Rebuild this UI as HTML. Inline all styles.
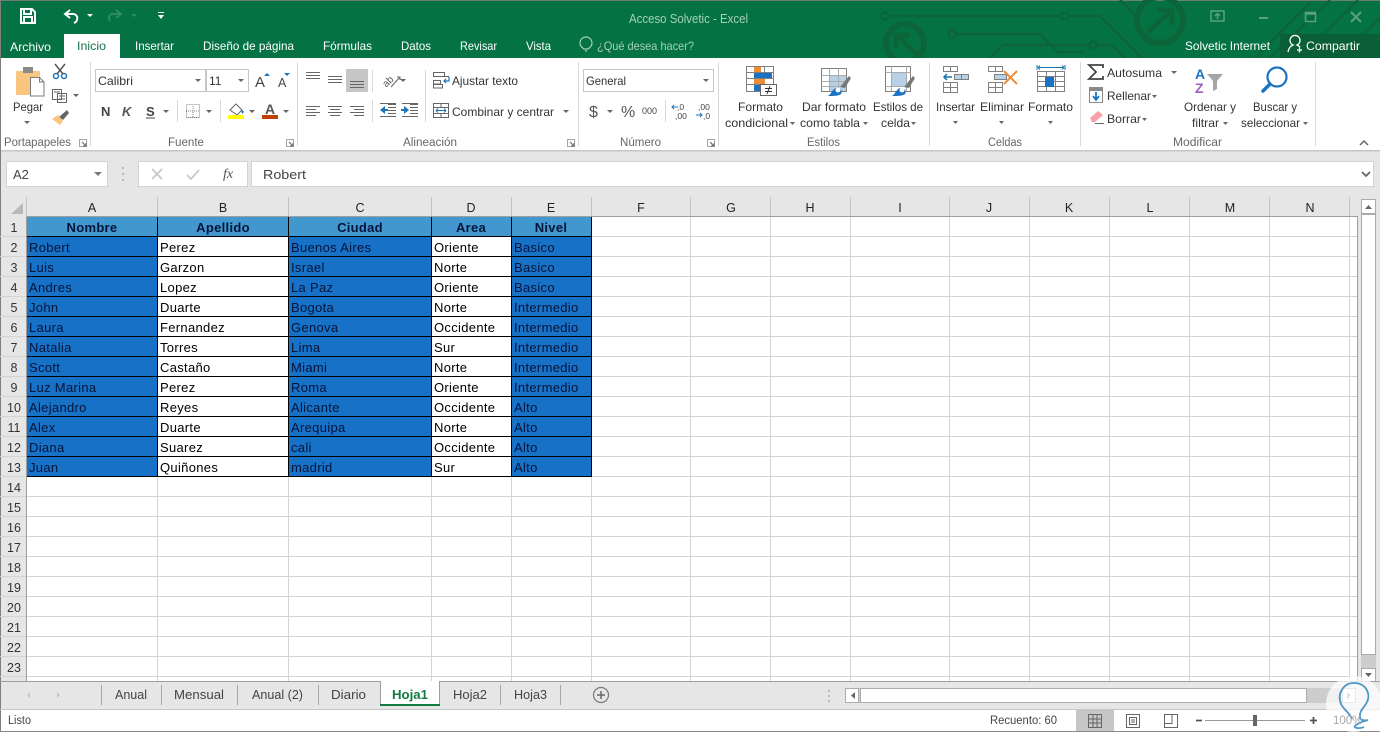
<!DOCTYPE html>
<html><head><meta charset="utf-8"><title>Acceso Solvetic - Excel</title>
<style>
html,body{margin:0;padding:0;width:1380px;height:732px;overflow:hidden;background:#fff}
svg{display:block;position:absolute;left:0;top:0}
text{font-family:"Liberation Sans",sans-serif;font-size:12px;fill:#444}
.t{fill:#fff}
.g{fill:#666;font-size:11.5px}
.r{fill:#333}
.c{font-size:13px;letter-spacing:.31px;fill:#000}
.b{font-size:13px;letter-spacing:.31px;fill:#03143a}
.h{font-size:13px;letter-spacing:.3px;font-weight:bold;fill:#03143a;text-anchor:middle}
.cl{font-size:12.5px;fill:#222;text-anchor:middle}
.rn{font-size:12.5px;fill:#333;text-anchor:middle}
.s{font-size:12.5px;fill:#444}
</style></head><body>
<svg width="1380" height="732" viewBox="0 0 1380 732" xmlns="http://www.w3.org/2000/svg">
<rect width="1380" height="732" fill="#e6e6e6"/>
<!-- title bar -->
<rect width="1380" height="58" fill="#047242"/>
<rect width="1380" height="1" fill="#6f7f76"/>
<g fill="none" stroke="#0c6539" stroke-width="2.5">
<circle cx="1160" cy="20" r="23" stroke-width="6"/>
<path d="M1148 32L1172 10M1157 10H1172V25" stroke-width="5"/>
<circle cx="905" cy="43" r="19" stroke-width="6"/>
<path d="M916 54L897 35M896 48V35H909" stroke-width="5"/>
<circle cx="885" cy="16" r="3.500"/><circle cx="1065" cy="16" r="3.500"/><circle cx="952" cy="34" r="3.500"/><circle cx="1093" cy="45" r="3.500"/>
<path d="M889 16H1061M1069 16H1100L1142 58M956 34H1040L1058 52H1085M1097 45H1112L1125 58M990 58L1003 45H1089M1120 0L1136 16M1255 58L1310 3M1270 58L1330 0M1340 58L1380 18M1300 58L1358 0"/>
</g>
<rect x="1280" y="34" width="100" height="24" fill="#0a5f37"/>
<rect x="64" y="34" width="56" height="25" fill="#fff"/>
<!-- QAT -->
<path d="M21 9h11l3 3v11H21zM24 9v5h7V9M24 23v-6h8v6" fill="none" stroke="#fff" stroke-width="2"/>
<path d="M70 10l-5 4 5 4M65 14h8c5 0 6 7 1 9" fill="none" stroke="#fff" stroke-width="2"/>
<path d="M116 10l5 4-5 4M121 14h-8c-4 0-5 4-3 7" fill="none" stroke="#2f8c60" stroke-width="2"/>
<path d="M87 14h6l-3 3z" fill="#fff"/><path d="M131 14h6l-3 3z" fill="#2f8c60"/>
<path d="M158 12h6v1h-6zM158 15h6l-3 4z" fill="#fff"/>
<text x="629" y="23" style="fill:#a5d1ba;font-size:12.5px" textLength="119" lengthAdjust="spacingAndGlyphs">Acceso Solvetic - Excel</text>
<g fill="none" stroke="#5aa27f" stroke-width="1.500">
<path d="M1211 11h13v10h-13zM1217.500 19v-5M1215 16l2.500-2.500 2.500 2.500"/>
<path d="M1259 18h9" stroke-width="2"/>
<path d="M1305.500 12.500h10v9h-10zM1305 14h11" />
<path d="M1351 12l10 10M1361 12l-10 10" stroke-width="2"/>
</g>
<!-- tabs -->
<g style="font-size:12px">
<text x="10" y="51" class="t" textLength="41" lengthAdjust="spacingAndGlyphs">Archivo</text>
<text x="77" y="50" style="fill:#17734a" textLength="29" lengthAdjust="spacingAndGlyphs">Inicio</text>
<text x="135" y="50" class="t" textLength="39" lengthAdjust="spacingAndGlyphs">Insertar</text>
<text x="203" y="50" class="t" textLength="91" lengthAdjust="spacingAndGlyphs">Diseño de página</text>
<text x="323" y="50" class="t" textLength="49" lengthAdjust="spacingAndGlyphs">Fórmulas</text>
<text x="401" y="50" class="t" textLength="30" lengthAdjust="spacingAndGlyphs">Datos</text>
<text x="460" y="50" class="t" textLength="37" lengthAdjust="spacingAndGlyphs">Revisar</text>
<text x="526" y="50" class="t" textLength="25" lengthAdjust="spacingAndGlyphs">Vista</text>
<text x="597" y="50" style="fill:#a5d1ba" textLength="97" lengthAdjust="spacingAndGlyphs">¿Qué desea hacer?</text>
<text x="1185" y="50" class="t" textLength="85" lengthAdjust="spacingAndGlyphs">Solvetic Internet</text>
<text x="1306" y="50" class="t" textLength="54" lengthAdjust="spacingAndGlyphs">Compartir</text>
</g>
<path d="M583 50c-3-2-4-4-4-6a6 6 0 0 1 12 0c0 2-1 4-4 6zM584 52h2" transform="translate(1,-1)" fill="none" stroke="#a5d1ba" stroke-width="1.200"/>
<path d="M1288 52c1-5 3-6 5-7a5 5 0 1 1 4 0c1 .5 2 1 3 2M1297 50h5M1299.500 47.500v5" fill="none" stroke="#fff" stroke-width="1.300"/>
<!-- ribbon -->
<rect y="58" width="1380" height="92" fill="#fff"/>
<rect y="150" width="1380" height="1.500" fill="#c6c6c6"/>
<rect x="0" y="0" width="1" height="732" fill="#7f7f7f"/>
<path d="M90.500 62v84M297.500 62v84M578.500 62v84M718.500 62v84M929.500 62v84M1080.500 62v84M1315.500 62v84M372.500 70v22M372.500 100v22M425.500 70v52M177.500 100v22M220.500 100v22M665.500 100v22" stroke="#d9d9d9" fill="none"/>
<!-- clipboard group -->
<rect x="16" y="71" width="24" height="24" fill="#f9c680"/>
<rect x="23" y="67" width="10" height="6" fill="#8a8a8a"/>
<path d="M30.500 77.500h9l4.500 4.500v14h-13.500zM39.500 77.500v4.500h4.500" fill="#fff" stroke="#7a7a7a"/>
<g fill="none" stroke="#1f73b7" stroke-width="1.500"><circle cx="56" cy="76" r="2.500"/><circle cx="64" cy="76" r="2.500"/></g>
<path d="M55 64l8 10M65 64l-8 10" stroke="#555" stroke-width="1.500" fill="none"/>
<path d="M52.500 89.500h9v10h-9zM57.500 93.500h9v9h-9zM54 92h6M59 96h6M59 99h6" fill="#fff" stroke="#666"/>
<path d="M59 117l8-7 2 3-6 7z" fill="#666"/><path d="M52 119l6-4 5 6-3 4z" fill="#f9c680"/>
<text x="13" y="111" class="r" textLength="30" lengthAdjust="spacingAndGlyphs">Pegar</text>
<text x="4" y="146" class="g" textLength="67" lengthAdjust="spacingAndGlyphs">Portapapeles</text>
<!-- font group -->
<rect x="95.500" y="69.500" width="110" height="22" fill="#fff" stroke="#c6c6c6"/>
<rect x="206.500" y="69.500" width="42" height="22" fill="#fff" stroke="#c6c6c6"/>
<text x="98" y="85" class="r" textLength="35" lengthAdjust="spacingAndGlyphs">Calibri</text>
<text x="209" y="85" class="r">11</text>
<text x="255" y="87" style="font-size:15px;fill:#444">A</text><text x="278" y="87" style="font-size:12.500px;fill:#444">A</text>
<path d="M264 76l3-3 3 3z" fill="#1f73b7"/><path d="M284 73h6l-3 3z" fill="#1f73b7"/>
<text x="101" y="116" style="font-size:13px;font-weight:bold;fill:#444">N</text>
<text x="122" y="116" style="font-size:13px;font-weight:bold;font-style:italic;fill:#555">K</text>
<text x="146" y="116" style="font-size:13px;font-weight:bold;fill:#444">S</text>
<path d="M146 118h9" stroke="#444"/>
<path d="M186.500 104.500h13v13h-13z" fill="none" stroke="#888" stroke-dasharray="1 1"/><path d="M186 117.500h14M193 104v13M186 111h14" stroke="#888" stroke-dasharray="1 1"/>
<path d="M230 110l6-6 6 6-5 5z" fill="#fff" stroke="#666"/><path d="M241 109l3 3-2 2z" fill="#1f73b7"/>
<rect x="228" y="115" width="16" height="4" fill="#ffff00"/>
<text x="265" y="114" style="font-size:14px;font-weight:bold;fill:#555">A</text>
<rect x="262" y="115" width="16" height="4" fill="#c04000"/>
<text x="168" y="146" class="g" textLength="36" lengthAdjust="spacingAndGlyphs">Fuente</text>
<!-- align -->
<rect x="346" y="69" width="22" height="23" fill="#c6c6c6"/>
<path d="M306 72.500h14M306 75.500h14M306 78.500h14M328 76.500h14M328 79.500h14M328 82.500h14M350 81.500h14M350 84.500h14M350 87.500h14M306 106.500h14M306 109.500h10M306 112.500h14M306 115.500h10M328 106.500h14M330 109.500h10M328 112.500h14M330 115.500h10M350 106.500h14M354 109.500h10M350 112.500h14M354 115.500h10M388 104.500h8M388 107.500h8M388 110.500h8M388 113.500h8M380 116.500h16M380 103.500h16M410 104.500h8M410 107.500h8M410 110.500h8M410 113.500h8M402 116.500h16M402 103.500h16" stroke="#666" fill="none"/>
<path d="M380 110l5-4v3h3v2h-3v3zM409 110l-5-4v3h-3v2h3v3z" fill="#1f73b7"/>
<text x="381" y="85" transform="rotate(-45 387 80)" style="font-size:10px;fill:#555">ab</text>
<path d="M391 87l9-10M397 77h3v3" fill="none" stroke="#666"/>
<path d="M433.500 72.500h11v4h-11zM433.500 80.500h7v3.500h-7zM433.500 84.500h9v3.500h-9zM433 76.500h16" fill="none" stroke="#666"/>
<path d="M449 77v4h-5M446 79l-2 2 2 2" fill="none" stroke="#1f73b7" stroke-width="1.200"/>
<path d="M433.500 103.500h15v14h-15zM433.500 107.500h15M433.500 113.500h15M441 103.500v4M441 113.500v4" fill="none" stroke="#666"/>
<path d="M436 110.500h10M436 110.500l2-2M436 110.500l2 2M446 110.500l-2-2M446 110.500l-2 2" stroke="#1f73b7" fill="none"/>
<text x="452" y="85" class="r" textLength="66" lengthAdjust="spacingAndGlyphs">Ajustar texto</text>
<text x="452" y="116" class="r" textLength="102" lengthAdjust="spacingAndGlyphs">Combinar y centrar</text>
<text x="403" y="146" class="g" textLength="54" lengthAdjust="spacingAndGlyphs">Alineación</text>
<!-- number -->
<rect x="583.500" y="69.500" width="130" height="22" fill="#fff" stroke="#c6c6c6"/>
<text x="586" y="85" class="r" textLength="40" lengthAdjust="spacingAndGlyphs">General</text>
<text x="589" y="117" style="font-size:16px;fill:#555">$</text>
<text x="621" y="117" style="font-size:16px;fill:#555">%</text>
<text x="642" y="114" style="font-size:9px;fill:#444">000</text>
<text x="677" y="110" style="font-size:8.500px;fill:#444">,0</text><text x="675" y="119" style="font-size:8.500px;fill:#444">,00</text>
<text x="698" y="110" style="font-size:8.500px;fill:#444">,00</text><text x="703" y="119" style="font-size:8.500px;fill:#444">,0</text>
<path d="M672 107h6M674 105l-2 2 2 2M696 115h6M700 113l2 2-2 2" stroke="#1f73b7" fill="none"/>
<text x="620" y="146" class="g" textLength="41" lengthAdjust="spacingAndGlyphs">Número</text>
<!-- launchers -->
<path d="M79.500 139.500h7v7h-7zM286.500 139.500h7v7h-7zM567.500 139.500h7v7h-7zM707.500 139.500h7v7h-7z" fill="none" stroke="#a6a6a6"/>
<path d="M82 142l4 4M86 143v3h-3M289 142l4 4M293 143v3h-3M570 142l4 4M574 143v3h-3M710 142l4 4M714 143v3h-3" stroke="#666" fill="none"/>
<!-- styles icons -->
<g fill="none" stroke="#808080">
<path d="M746.500 66.500h27v25h-27zM746.500 72.500h27M746.500 78.500h27M746.500 84.500h27M755.500 66.500v25M764.500 66.500v25"/>
</g>
<rect x="754" y="67" width="7" height="5" fill="#ed8b37"/><rect x="754" y="73" width="18" height="5" fill="#1b72c4"/><rect x="754" y="79" width="11" height="5" fill="#ed8b37"/><rect x="754" y="85" width="6" height="6" fill="#1b72c4"/>
<rect x="760.500" y="84.500" width="16" height="11" fill="#fff" stroke="#666"/>
<path d="M765 88.500h7M765 91.500h7M770 86l-3 8" stroke="#333" fill="none"/>
<rect x="821.500" y="68.500" width="25" height="23" fill="#fff" stroke="#808080"/>
<rect x="829" y="75" width="17" height="16" fill="#b8d0e6"/>
<path d="M821.500 75.500h25M821.500 81.500h25M821.500 86.500h25M829.500 68.500v23M838.500 68.500v23" stroke="#aaa" fill="none"/>
<path d="M840 87l9-11 2 2-6 10z" fill="#777"/><path d="M827 96c4 0 4-6 9-8 5 0 7 3 5 6-2 2-7 2-14 2z" fill="#1b72c4"/><circle cx="838" cy="90" r="2.500" fill="#fff"/>
<rect x="885.500" y="66.500" width="25" height="25" fill="#fff" stroke="#808080"/>
<rect x="891" y="73" width="16" height="13" fill="#b8d0e6"/>
<path d="M885.500 72.500h25M885.500 86.500h25M891.500 66.500v25M906.500 66.500v25" stroke="#aaa" fill="none"/>
<path d="M904 87l9-11 2 2-6 10z" fill="#777"/><path d="M891 96c4 0 4-6 9-8 5 0 7 3 5 6-2 2-7 2-14 2z" fill="#1b72c4"/><circle cx="902" cy="90" r="2.500" fill="#fff"/>
<text x="738" y="111" class="r" textLength="45" lengthAdjust="spacingAndGlyphs">Formato</text>
<text x="725" y="127" class="r" textLength="63" lengthAdjust="spacingAndGlyphs">condicional</text>
<text x="802" y="111" class="r" textLength="64" lengthAdjust="spacingAndGlyphs">Dar formato</text>
<text x="800" y="127" class="r" textLength="60" lengthAdjust="spacingAndGlyphs">como tabla</text>
<text x="873" y="111" class="r" textLength="50" lengthAdjust="spacingAndGlyphs">Estilos de</text>
<text x="881" y="127" class="r" textLength="29" lengthAdjust="spacingAndGlyphs">celda</text>
<text x="807" y="146" class="g" textLength="33" lengthAdjust="spacingAndGlyphs">Estilos</text>
<!-- cells icons -->
<g fill="none" stroke="#808080">
<path d="M943.500 66.500h14v5h-14zM950.500 66.500v5M943.500 82.500h14v10h-14zM943.500 87.500h14M950.500 82.500v10"/>
<path d="M954.500 74.500h14v5h-14zM961.500 74.500v5" fill="#b8d0e6"/>
<path d="M988.500 66.500h14v5h-14zM995.500 66.500v5M988.500 82.500h14v10h-14zM988.500 87.500h14M995.500 82.500v10"/>
<path d="M994.500 74.500h12v5h-12z" fill="#b8d0e6"/>
<path d="M1037.500 71.500h27v20h-27zM1037.500 76.500h27M1037.500 81.500h27M1037.500 86.500h27M1046.500 71.500v20M1055.500 71.500v20"/>
</g>
<path d="M952 77h-8M947 74l-3 3 3 3" stroke="#1573ae" stroke-width="1.500" fill="none"/>
<path d="M1004 71l13 13M1017 71l-13 13" stroke="#ed8b37" stroke-width="2" fill="none"/>
<rect x="1045" y="77" width="9" height="10" fill="#1b72c4"/>
<path d="M1037 65v5M1065 65v5M1038 67.500h26M1038 67.500l2-2M1038 67.500l2 2M1064 67.500l-2-2M1064 67.500l-2 2" stroke="#1573ae" fill="none"/>
<text x="936" y="111" class="r" textLength="39" lengthAdjust="spacingAndGlyphs">Insertar</text>
<text x="980" y="111" class="r" textLength="44" lengthAdjust="spacingAndGlyphs">Eliminar</text>
<text x="1028" y="111" class="r" textLength="45" lengthAdjust="spacingAndGlyphs">Formato</text>
<text x="988" y="146" class="g" textLength="34" lengthAdjust="spacingAndGlyphs">Celdas</text>
<!-- edit -->
<path d="M1103 68v-3h-14l7 7-7 7h14v-3" fill="none" stroke="#444" stroke-width="1.800"/>
<path d="M1089.500 87.500h13v15h-13z" fill="#fff" stroke="#888"/><rect x="1089" y="87" width="14" height="4" fill="#888"/>
<path d="M1096 92v7M1093 96l3 4 3-4" stroke="#1b72c4" stroke-width="1.800" fill="none"/>
<path d="M1090 118l8-7 5 4-8 7h-3z" fill="#f9a0a8"/><path d="M1095 123.500h9" stroke="#666"/>
<text x="1107" y="77" class="r" textLength="55" lengthAdjust="spacingAndGlyphs">Autosuma</text>
<text x="1107" y="100" class="r" textLength="44" lengthAdjust="spacingAndGlyphs">Rellenar</text>
<text x="1107" y="123" class="r" textLength="34" lengthAdjust="spacingAndGlyphs">Borrar</text>
<text x="1195" y="79" style="font-size:14px;font-weight:bold;fill:#1b72c4">A</text>
<text x="1195" y="93" style="font-size:14px;font-weight:bold;fill:#9b5fc0">Z</text>
<path d="M1207 74h16l-6 7v8l-4 2v-10z" fill="#a6a6a6"/>
<circle cx="1277" cy="77" r="9.500" fill="none" stroke="#1b72c4" stroke-width="2.200"/>
<path d="M1270 84l-7 7" stroke="#1b72c4" stroke-width="3.500" stroke-linecap="round"/>
<text x="1184" y="111" class="r" textLength="52" lengthAdjust="spacingAndGlyphs">Ordenar y</text>
<text x="1192" y="127" class="r" textLength="27" lengthAdjust="spacingAndGlyphs">filtrar</text>
<text x="1253" y="111" class="r" textLength="44" lengthAdjust="spacingAndGlyphs">Buscar y</text>
<text x="1241" y="127" class="r" textLength="59" lengthAdjust="spacingAndGlyphs">seleccionar</text>
<text x="1173" y="146" class="g" textLength="49" lengthAdjust="spacingAndGlyphs">Modificar</text>
<path d="M1360 145l4-4 4 4" fill="none" stroke="#666" stroke-width="1.500"/>
<!-- small arrows -->
<path fill="#666" d="M24 121h6l-3 3zM73 94h6l-3 3zM195 79h6l-3 3zM238 79h6l-3 3zM163 110h6l-3 3zM206 110h6l-3 3zM249 110h6l-3 3zM283 110h6l-3 3zM400 79h6l-3 3zM563 110h6l-3 3zM703 79h6l-3 3zM607 110h6l-3 3zM790 122h5l-2.500 3zM863 122h5l-2.500 3zM911 122h5l-2.500 3zM953 121h5l-2.500 3zM999 121h5l-2.500 3zM1048 121h5l-2.500 3zM1171 71h6l-3 3zM1152 95h5l-2.500 3zM1142 118h5l-2.500 3zM1223 122h5l-2.500 3zM1303 122h5l-2.500 3z"/>
<!-- formula bar -->
<rect x="6.500" y="161.500" width="101" height="25" fill="#fff" stroke="#d4d4d4"/>
<rect x="138.500" y="161.500" width="109" height="25" fill="#fff" stroke="#d4d4d4"/>
<rect x="251.500" y="161.500" width="1122" height="25" fill="#fff" stroke="#d4d4d4"/>
<text x="13" y="179" class="s" style="font-size:13px">A2</text>
<text x="263" y="179" class="s" textLength="43" lengthAdjust="spacingAndGlyphs" style="font-size:13px">Robert</text>
<path d="M94 172h8l-4 4z" fill="#777"/>
<path d="M123 167v2M123 173v2M123 179v2" stroke="#aaa" stroke-width="1.500"/>
<path d="M152 169l10 10M162 169l-10 10M187 175l4 4 8-9" fill="none" stroke="#c8c8c8" stroke-width="1.800"/>
<text x="223" y="178" style="font-family:'Liberation Serif',serif;font-style:italic;font-size:14px;fill:#555">fx</text>
<path d="M1362 172l4 4 4-4" fill="none" stroke="#666" stroke-width="1.800"/>
<!-- sheet -->
<rect x="27" y="217" width="1330" height="464" fill="#fff"/>
<path d="M11 214l12-11v11z" fill="#b8b8b8"/>
<rect x="27" y="217" width="565" height="20" fill="#4297ce"/>
<rect x="27" y="237" width="131" height="240" fill="#1771c6"/>
<rect x="289" y="237" width="143" height="240" fill="#1771c6"/>
<rect x="512" y="237" width="80" height="240" fill="#1771c6"/>
<!-- gridlines -->
<path stroke="#d4d4d4" fill="none" d="M157.500 477v204M288.500 477v204M431.500 477v204M511.500 477v204M591.500 217v464M690.500 217v464M770.500 217v464M850.500 217v464M949.500 217v464M1029.500 217v464M1109.500 217v464M1189.500 217v464M1269.500 217v464M1349.500 217v464M592 236.500h765M592 256.500h765M592 276.500h765M592 296.500h765M592 316.500h765M592 336.500h765M592 356.500h765M592 376.500h765M592 396.500h765M592 416.500h765M592 436.500h765M592 456.500h765M27 476.500h1330M27 496.500h1330M27 516.500h1330M27 536.500h1330M27 556.500h1330M27 576.500h1330M27 596.500h1330M27 616.500h1330M27 636.500h1330M27 656.500h1330M27 676.500h1330M0 236.500h27M0 256.500h27M0 276.500h27M0 296.500h27M0 316.500h27M0 336.500h27M0 356.500h27M0 376.500h27M0 396.500h27M0 416.500h27M0 436.500h27M0 456.500h27M0 476.500h27M0 496.500h27M0 516.500h27M0 536.500h27M0 556.500h27M0 576.500h27M0 596.500h27M0 616.500h27M0 636.500h27M0 656.500h27M0 676.500h27"/>
<path stroke="#c2c2c2" fill="none" d="M26.500 197v20M157.500 197v20M288.500 197v20M431.500 197v20M511.500 197v20M591.500 197v20M690.500 197v20M770.500 197v20M850.500 197v20M949.500 197v20M1029.500 197v20M1109.500 197v20M1189.500 197v20M1269.500 197v20M1349.500 197v20"/>
<path stroke="#9e9e9e" fill="none" d="M27 216.500h1330.500v465M26.500 217v464"/>
<!-- table borders -->
<path stroke="#000" fill="none" d="M157.500 217v260M288.500 217v260M431.500 217v260M511.500 217v260M591.500 217v260M27 236.500h565M27 256.500h565M27 276.500h565M27 296.500h565M27 316.500h565M27 336.500h565M27 356.500h565M27 376.500h565M27 396.500h565M27 416.500h565M27 436.500h565M27 456.500h565M27 476.500h565"/>
<!-- col headers -->
<text x="92" y="212" class="cl">A</text><text x="223" y="212" class="cl">B</text><text x="360" y="212" class="cl">C</text><text x="471" y="212" class="cl">D</text><text x="551" y="212" class="cl">E</text><text x="641" y="212" class="cl">F</text><text x="731" y="212" class="cl">G</text><text x="810" y="212" class="cl">H</text><text x="900" y="212" class="cl">I</text><text x="989" y="212" class="cl">J</text><text x="1069" y="212" class="cl">K</text><text x="1150" y="212" class="cl">L</text><text x="1230" y="212" class="cl">M</text><text x="1310" y="212" class="cl">N</text>
<!-- row numbers -->
<text x="14" y="232" class="rn">1</text><text x="14" y="252" class="rn">2</text><text x="14" y="272" class="rn">3</text><text x="14" y="292" class="rn">4</text><text x="14" y="312" class="rn">5</text><text x="14" y="332" class="rn">6</text><text x="14" y="352" class="rn">7</text><text x="14" y="372" class="rn">8</text><text x="14" y="392" class="rn">9</text><text x="14" y="412" class="rn">10</text><text x="14" y="432" class="rn">11</text><text x="14" y="452" class="rn">12</text><text x="14" y="472" class="rn">13</text><text x="14" y="492" class="rn">14</text><text x="14" y="512" class="rn">15</text><text x="14" y="532" class="rn">16</text><text x="14" y="552" class="rn">17</text><text x="14" y="572" class="rn">18</text><text x="14" y="592" class="rn">19</text><text x="14" y="612" class="rn">20</text><text x="14" y="632" class="rn">21</text><text x="14" y="652" class="rn">22</text><text x="14" y="672" class="rn">23</text>
<!-- header cells -->
<text x="92" y="232" class="h">Nombre</text><text x="223" y="232" class="h">Apellido</text><text x="360" y="232" class="h">Ciudad</text><text x="471" y="232" class="h">Area</text><text x="551" y="232" class="h">Nivel</text>
<!-- data -->
<text x="29" y="252" class="b">Robert</text><text x="160" y="252" class="c">Perez</text><text x="291" y="252" class="b">Buenos Aires</text><text x="434" y="252" class="c">Oriente</text><text x="514" y="252" class="b">Basico</text>
<text x="29" y="272" class="b">Luis</text><text x="160" y="272" class="c">Garzon</text><text x="291" y="272" class="b">Israel</text><text x="434" y="272" class="c">Norte</text><text x="514" y="272" class="b">Basico</text>
<text x="29" y="292" class="b">Andres</text><text x="160" y="292" class="c">Lopez</text><text x="291" y="292" class="b">La Paz</text><text x="434" y="292" class="c">Oriente</text><text x="514" y="292" class="b">Basico</text>
<text x="29" y="312" class="b">John</text><text x="160" y="312" class="c">Duarte</text><text x="291" y="312" class="b">Bogota</text><text x="434" y="312" class="c">Norte</text><text x="514" y="312" class="b">Intermedio</text>
<text x="29" y="332" class="b">Laura</text><text x="160" y="332" class="c">Fernandez</text><text x="291" y="332" class="b">Genova</text><text x="434" y="332" class="c">Occidente</text><text x="514" y="332" class="b">Intermedio</text>
<text x="29" y="352" class="b">Natalia</text><text x="160" y="352" class="c">Torres</text><text x="291" y="352" class="b">Lima</text><text x="434" y="352" class="c">Sur</text><text x="514" y="352" class="b">Intermedio</text>
<text x="29" y="372" class="b">Scott</text><text x="160" y="372" class="c">Castaño</text><text x="291" y="372" class="b">Miami</text><text x="434" y="372" class="c">Norte</text><text x="514" y="372" class="b">Intermedio</text>
<text x="29" y="392" class="b">Luz Marina</text><text x="160" y="392" class="c">Perez</text><text x="291" y="392" class="b">Roma</text><text x="434" y="392" class="c">Oriente</text><text x="514" y="392" class="b">Intermedio</text>
<text x="29" y="412" class="b">Alejandro</text><text x="160" y="412" class="c">Reyes</text><text x="291" y="412" class="b">Alicante</text><text x="434" y="412" class="c">Occidente</text><text x="514" y="412" class="b">Alto</text>
<text x="29" y="432" class="b">Alex</text><text x="160" y="432" class="c">Duarte</text><text x="291" y="432" class="b">Arequipa</text><text x="434" y="432" class="c">Norte</text><text x="514" y="432" class="b">Alto</text>
<text x="29" y="452" class="b">Diana</text><text x="160" y="452" class="c">Suarez</text><text x="291" y="452" class="b">cali</text><text x="434" y="452" class="c">Occidente</text><text x="514" y="452" class="b">Alto</text>
<text x="29" y="472" class="b">Juan</text><text x="160" y="472" class="c">Quiñones</text><text x="291" y="472" class="b">madrid</text><text x="434" y="472" class="c">Sur</text><text x="514" y="472" class="b">Alto</text>
<!-- vertical scrollbar -->
<rect x="1358" y="198" width="22" height="484" fill="#e6e6e6"/>
<path d="M1357.500 216v465" stroke="#9e9e9e"/>
<rect x="1361.500" y="199.500" width="14" height="14" fill="#fff" stroke="#ababab"/>
<path d="M1365 209l3.500-4 3.500 4z" fill="#666"/>
<rect x="1361.500" y="214.500" width="14" height="440" fill="#fff" stroke="#ababab"/>
<rect x="1361" y="655" width="15" height="14" fill="#cdcdcd"/>
<rect x="1361.500" y="668.500" width="14" height="13" fill="#fff" stroke="#ababab"/>
<path d="M1365 673h7l-3.500 4z" fill="#666"/>
<!-- tab bar -->
<rect x="1" y="682" width="1379" height="27" fill="#e6e6e6"/>
<path d="M0 681.500h1380" stroke="#9e9e9e"/>
<path d="M30 692v6l-3-3zM57 692v6l3-3z" fill="#c6c6c6"/>
<rect x="380" y="681" width="60" height="24" fill="#fff"/>
<path d="M380.500 681v24M439.500 681v24" stroke="#9e9e9e"/>
<rect x="380" y="704" width="60" height="2" fill="#107c41"/>
<path d="M101.500 685v20M161.500 685v20M237.500 685v20M318.500 685v20M500.500 685v20M560.500 685v20" stroke="#a6a6a6"/>
<text x="115" y="699" class="s" textLength="32" lengthAdjust="spacingAndGlyphs">Anual</text>
<text x="174" y="699" class="s" textLength="50" lengthAdjust="spacingAndGlyphs">Mensual</text>
<text x="252" y="699" class="s" textLength="51" lengthAdjust="spacingAndGlyphs">Anual (2)</text>
<text x="331" y="699" class="s" textLength="35" lengthAdjust="spacingAndGlyphs">Diario</text>
<text x="392" y="699" class="s" style="font-weight:bold;fill:#107c41" textLength="36" lengthAdjust="spacingAndGlyphs">Hoja1</text>
<text x="453" y="699" class="s" textLength="34" lengthAdjust="spacingAndGlyphs">Hoja2</text>
<text x="514" y="699" class="s" textLength="33" lengthAdjust="spacingAndGlyphs">Hoja3</text>
<circle cx="601" cy="695" r="7.500" fill="none" stroke="#777" stroke-width="1.200"/><path d="M597 695h8M601 691v8" stroke="#666" stroke-width="1.500"/>
<path d="M829 690v2M829 695v2M829 700v2" stroke="#aaa" stroke-width="1.500"/>
<!-- hscroll -->
<rect x="845" y="688" width="511" height="15" fill="#cdcdcd"/>
<rect x="845.500" y="688.500" width="13" height="14" fill="#fff" stroke="#ababab"/>
<path d="M855 692v7l-4-3.500z" fill="#666"/>
<rect x="860.500" y="688.500" width="446" height="14" fill="#fff" stroke="#ababab"/>
<rect x="1342.500" y="688.500" width="13" height="14" fill="#fff" stroke="#ababab"/>
<path d="M1347 692v7l4-3.500z" fill="#999"/>
<!-- status bar -->
<rect x="1" y="710" width="1379" height="21" fill="#fff"/>
<path d="M0 709.500h1380" stroke="#c6c6c6"/><path d="M0 731.500h1380" stroke="#8a8a8a"/>
<text x="8" y="724" class="s" style="font-size:11.500px" textLength="23" lengthAdjust="spacingAndGlyphs">Listo</text>
<text x="990" y="724" class="s" style="font-size:11.500px" textLength="67" lengthAdjust="spacingAndGlyphs">Recuento: 60</text>
<rect x="1076" y="710" width="38" height="21" fill="#c6c6c6"/>
<path d="M1088.500 714.500h13v13h-13zM1088.500 719h13M1088.500 723h13M1093 714.500v13M1097 714.500v13" fill="none" stroke="#666"/>
<path d="M1126.500 714.500h13v13h-13zM1129.500 717.500h7v7h-7zM1131 720h4M1131 722h4" fill="none" stroke="#666"/>
<path d="M1164.500 714.500h13v13h-13zM1164.500 723.500h7.500v-9" fill="none" stroke="#666"/>
<path d="M1205 720.500h100" stroke="#999"/><path d="M1196 720.500h6M1310 720.500h7M1313.500 717v7" stroke="#555" stroke-width="1.800"/>
<rect x="1253" y="715" width="4" height="11" fill="#666"/>
<!-- watermark -->
<circle cx="1354" cy="704" r="28" fill="#fff" fill-opacity=".72"/>
<path d="M1352 719c-3-7-8-9-11-15-4-10 2-21 13-21 12 0 17 11 13 19-3 6-8 9-7 15 0 3 4 4 8 3-4 1-10 3-13 6-2 2 5 3 9 1" fill="none" stroke="#4d97c6" stroke-width="1.800"/>
<text x="1333" y="724" style="font-size:11.500px;fill:#a8a8a8">100%</text>
</svg>
</body></html>
